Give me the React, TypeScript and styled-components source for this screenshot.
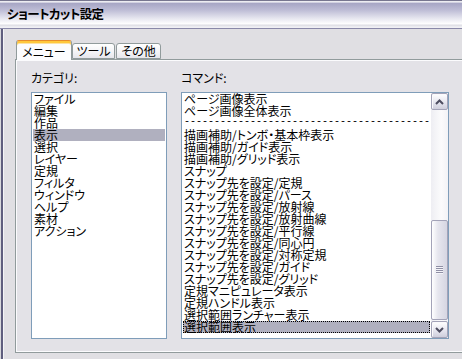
import React from "react";
import styled, { createGlobalStyle } from "styled-components";

const GlobalStyle = createGlobalStyle`
  html, body {
    margin: 0;
    padding: 0;
    background: #e0dfe3;
    overflow: hidden;
  }
  * {
    box-sizing: border-box;
  }
`;

const FONT = `"Noto Sans CJK JP", "Noto Sans", sans-serif`;

const Window = styled.div`
  width: 462px;
  height: 359px;
  display: flex;
  flex-direction: column;
  overflow: hidden;
  background: #e0dfe3;
  font-family: ${FONT};
  font-feature-settings: "palt";
  color: #000;
`;

const TitleBar = styled.div`
  height: 29px;
  flex-shrink: 0;
  display: flex;
  align-items: center;
  padding: 0 0 1px 7px;
  border-top: 1px solid #77768f;
  border-bottom: 1px solid #8a89a8;
  background: linear-gradient(
    to bottom,
    #d9d9e3 0px,
    #ffffff 1px,
    #a6a5c4 2px,
    #bdbcd5 9px,
    #e4e4ee 17px,
    #ffffff 23px,
    #dcdce3 24px,
    #f0f0f4 26px
  );
`;

const Title = styled.span`
  font-size: 12.5px;
  font-weight: 700;
  line-height: 14px;
  letter-spacing: -0.6px;
`;

const Body = styled.div`
  flex: 1;
  display: flex;
  flex-direction: column;
  padding: 11px 0 6px 15px;
  box-shadow: inset 1px 0 #d8d8dc, inset 3px 0 #5f5e7e, inset 4px 0 #f4f4f6;
`;

const TabStrip = styled.div`
  height: 19px;
  display: flex;
  align-items: flex-end;
  padding-left: 1px;
`;

const Tab = styled.div<{ $active?: boolean; $width: number }>`
  position: relative;
  z-index: ${({ $active }) => ($active ? 2 : 1)};
  width: ${({ $width }) => $width}px;
  height: ${({ $active }) => ($active ? 20 : 16)}px;
  margin-bottom: ${({ $active }) => ($active ? -1 : 0)}px;
  margin-right: ${({ $active }) => ($active ? 0 : 1)}px;
  display: flex;
  align-items: center;
  justify-content: center;
  padding-top: ${({ $active }) => ($active ? 2 : 0)}px;
  font-size: 12px;
  line-height: 12px;
  border: 1px solid #919b9c;
  border-bottom: ${({ $active }) => ($active ? "none" : "1px solid #919b9c")};
  border-radius: 3px 3px 0 0;
  background: ${({ $active }) =>
    $active
      ? "#fcfcfe"
      : "linear-gradient(to bottom, #ffffff 0%, #f3f3f6 60%, #e6e6ec 100%)"};
  box-shadow: ${({ $active }) =>
    $active ? "inset 0 2px #ffc83c, inset 0 3px #fce2a4" : "none"};
  border-top-color: ${({ $active }) => ($active ? "#e68b2c" : "#919b9c")};
`;

const Panel = styled.div`
  height: 294px;
  border: 1px solid #919b9c;
  border-right: none;
  background: #e3e2e7;
  box-shadow: inset 1px 1px #fbfbfd, inset 0 -1px #fbfbfd;
  padding: 12px 0 0 15px;
  display: grid;
  grid-template-columns: 136px 268px;
  column-gap: 14px;
  align-content: start;
`;

const Column = styled.div`
  display: flex;
  flex-direction: column;
`;

const Label = styled.div`
  font-size: 12px;
  line-height: 12px;
  height: 12px;
  margin-bottom: 8px;
`;

const ListBox = styled.div`
  height: 247px;
  border: 1px solid #7f9db9;
  background: #ffffff;
  display: flex;
  overflow: hidden;
`;

const Items = styled.div`
  flex: 1;
  min-width: 0;
  padding: 0 1px;
  overflow: hidden;
`;

const Item = styled.div<{ $selected?: boolean; $focused?: boolean }>`
  height: 12px;
  font-size: 12px;
  line-height: 12px;
  padding-left: 1px;
  white-space: nowrap;
  background: ${({ $selected }) => ($selected ? "#b0b0bf" : "transparent")};
  outline: ${({ $focused }) => ($focused ? "1px dotted #000" : "none")};
  outline-offset: -1px;
`;

const Separator = styled.div`
  height: 12px;
  padding-left: 1px;
  font-family: "Liberation Mono", monospace;
  font-size: 10px;
  line-height: 10px;
  white-space: nowrap;
  overflow: hidden;
`;

const ScrollBar = styled.div`
  width: 17px;
  flex-shrink: 0;
  display: flex;
  flex-direction: column;
  background: linear-gradient(to right, #eeeef3 0%, #fbfbfc 60%, #f3f3f6 100%);
`;

const ScrollButton = styled.div`
  height: 17px;
  flex-shrink: 0;
  display: flex;
  align-items: center;
  justify-content: center;
  border: 1px solid #a3a3b8;
  border-radius: 2px;
  background: linear-gradient(to bottom, #ffffff 0%, #e4e4ee 60%, #cfcfdc 100%);
  box-shadow: inset 1px 1px #fafafc;
`;

const Track = styled.div`
  flex: 1;
  display: flex;
  flex-direction: column;
  justify-content: flex-end;
  padding-bottom: 1px;
`;

const Thumb = styled.div`
  height: 100px;
  border: 1px solid #a3a3b8;
  border-radius: 2px;
  background: linear-gradient(to right, #ffffff 0%, #e6e6ee 40%, #d6d6e2 100%);
  display: flex;
  align-items: center;
  justify-content: center;
`;

const Grip = styled.div`
  width: 7px;
  height: 8px;
  background: repeating-linear-gradient(
    to bottom,
    #8f8fa5 0px,
    #8f8fa5 1px,
    #f4f4f8 1px,
    #f4f4f8 2px
  );
`;

const Chevron = ({ up }: { up?: boolean }) => (
  <svg width="9" height="6" viewBox="0 0 9 6">
    <polyline
      points={up ? "1,5 4.5,1.5 8,5" : "1,1 4.5,4.5 8,1"}
      fill="none"
      stroke="#4d4d60"
      strokeWidth="2"
    />
  </svg>
);

const categories = [
  "ファイル",
  "編集",
  "作品",
  "表示",
  "選択",
  "レイヤー",
  "定規",
  "フィルタ",
  "ウィンドウ",
  "ヘルプ",
  "素材",
  "アクション",
];

const commands = [
  "ページ画像表示",
  "ページ画像全体表示",
  "---",
  "描画補助/トンボ・基本枠表示",
  "描画補助/ガイド表示",
  "描画補助/グリッド表示",
  "スナップ",
  "スナップ先を設定/定規",
  "スナップ先を設定/パース",
  "スナップ先を設定/放射線",
  "スナップ先を設定/放射曲線",
  "スナップ先を設定/平行線",
  "スナップ先を設定/同心円",
  "スナップ先を設定/対称定規",
  "スナップ先を設定/ガイド",
  "スナップ先を設定/グリッド",
  "定規マニピュレータ表示",
  "定規ハンドル表示",
  "選択範囲ランチャー表示",
  "選択範囲表示",
];

const App = () => {
  return (
    <Window>
      <GlobalStyle />
      <TitleBar>
        <Title>ショートカット設定</Title>
      </TitleBar>
      <Body>
        <TabStrip>
          <Tab $active $width={56}>
            メニュー
          </Tab>
          <Tab $width={43}>ツール</Tab>
          <Tab $width={45}>その他</Tab>
        </TabStrip>
        <Panel>
          <Column>
            <Label>カテゴリ:</Label>
            <ListBox>
              <Items>
                {categories.map((c) => (
                  <Item key={c} $selected={c === "表示"}>
                    {c}
                  </Item>
                ))}
              </Items>
            </ListBox>
          </Column>
          <Column>
            <Label>コマンド:</Label>
            <ListBox>
              <Items>
                {commands.map((c, i) =>
                  c === "---" ? (
                    <Separator key={i}>{"-".repeat(41)}</Separator>
                  ) : (
                    <Item
                      key={i}
                      $selected={i === commands.length - 1}
                      $focused={i === commands.length - 1}
                    >
                      {c}
                    </Item>
                  )
                )}
              </Items>
              <ScrollBar>
                <ScrollButton>
                  <Chevron up />
                </ScrollButton>
                <Track>
                  <Thumb>
                    <Grip />
                  </Thumb>
                </Track>
                <ScrollButton>
                  <Chevron />
                </ScrollButton>
              </ScrollBar>
            </ListBox>
          </Column>
        </Panel>
      </Body>
    </Window>
  );
};

export default App;
